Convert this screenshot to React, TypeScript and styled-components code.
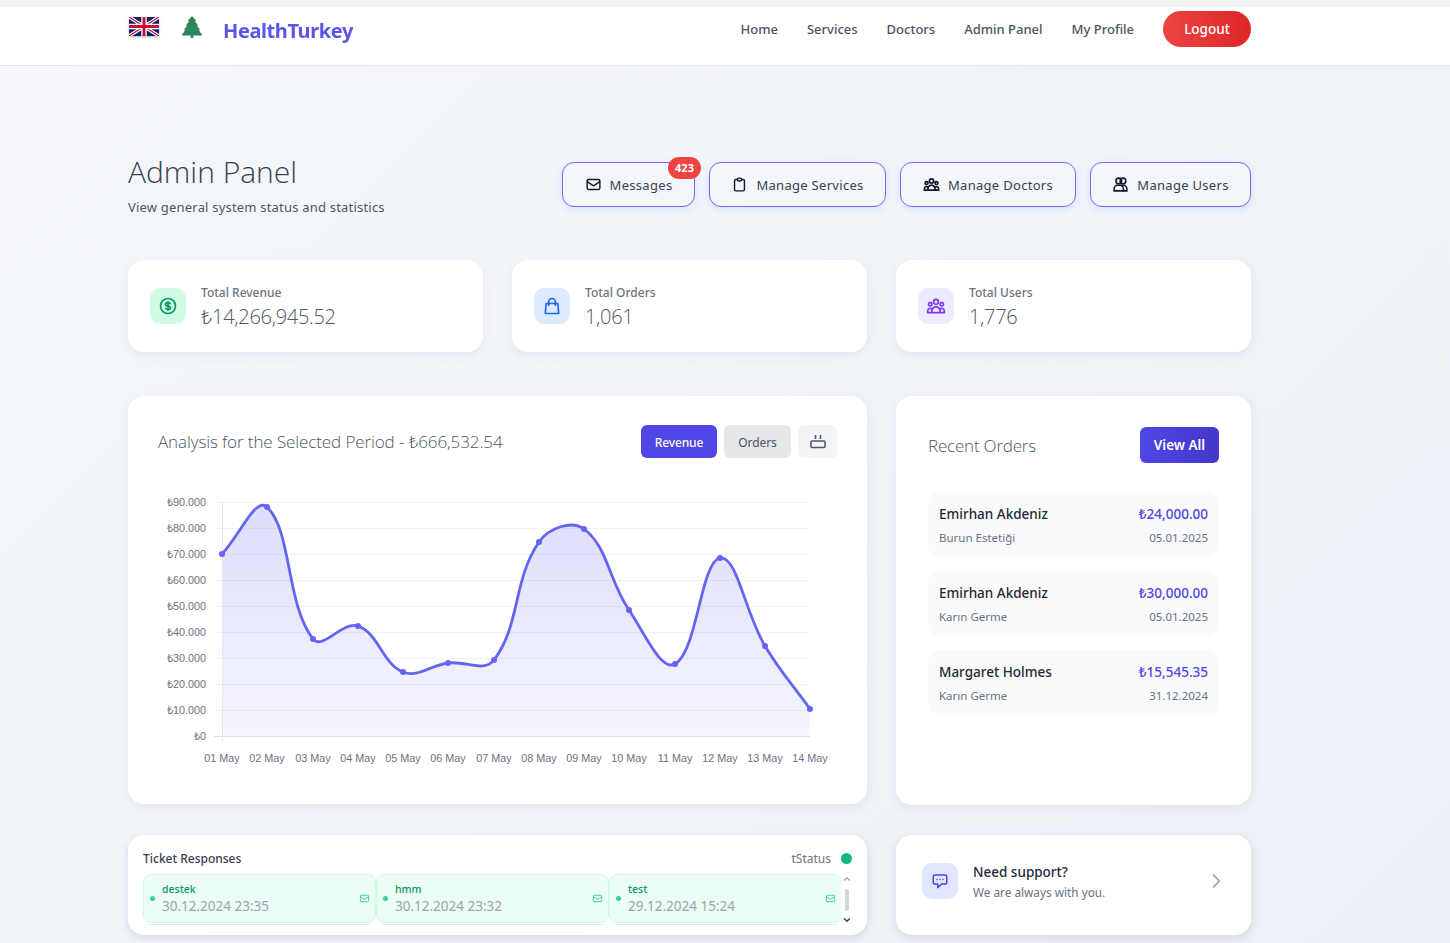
import React from "react";
import styled, { createGlobalStyle } from "styled-components";
import {
  HiOutlineChatAlt,
  HiOutlineChevronRight,
  HiOutlineClipboard,
  HiOutlineCurrencyDollar,
  HiOutlineMail,
  HiOutlineShoppingBag,
  HiOutlineUserGroup,
} from "react-icons/hi";
import { LuChevronDown, LuChevronUp } from "react-icons/lu";

const GlobalStyle = createGlobalStyle`
  html, body {
    margin: 0;
    padding: 0;
    height: 943px;
    overflow: hidden;
    font-family: "Noto Sans", "Liberation Sans", sans-serif;
    color: #1f2937;
  }
  * { box-sizing: border-box; }
`;

const LIGHT_FONT = `"Open Sans", "Noto Sans", sans-serif`;

const Page = styled.div`
  height: 943px;
  overflow: hidden;
  background: linear-gradient(135deg, #f6f8fc 0%, #eceff5 100%);
`;

const TopStripe = styled.div`
  height: 7px;
  background: #f3f4f6;
`;

const NavBar = styled.header`
  height: 59px;
  background: #fff;
  border-bottom: 1px solid #e5e7eb;
`;

const NavInner = styled.div`
  width: 1123px;
  margin-left: 128px;
  display: flex;
  align-items: flex-start;
  justify-content: space-between;
`;

const Brand = styled.div`
  display: flex;
  align-items: center;
  height: 47px;
`;

const Flag = styled.svg`
  width: 30px;
  height: 19px;
  margin: -8px 0 0 1px;
  filter: drop-shadow(0 1px 1px rgba(0, 0, 0, 0.3));
`;

const Tree = styled.svg`
  width: 20px;
  height: 22px;
  margin: -7px 0 0 23px;
`;

const Logo = styled.span`
  margin-left: 21px;
  font-size: 20px;
  font-weight: 700;
  letter-spacing: -0.4px;
  color: #4f46e5;
  opacity: 0.92;
`;

const NavLinks = styled.nav`
  display: flex;
  align-items: center;
  gap: 29px;
  height: 36px;
  margin-top: 4px;
`;

const NavLink = styled.a`
  font-size: 13px;
  font-weight: 500;
  color: #4b5563;
`;

const LogoutButton = styled.button`
  width: 88px;
  height: 36px;
  border: 0;
  border-radius: 18px;
  background: linear-gradient(90deg, #ef4444, #dc2626);
  color: #fff;
  font: 500 13.5px "Noto Sans", sans-serif;
`;

const Content = styled.main`
  width: 1123px;
  margin-left: 128px;
`;

const HeaderRow = styled.section`
  display: flex;
  justify-content: space-between;
  align-items: flex-start;
  height: 194px;
  padding-top: 86px;
`;

const Title = styled.h1`
  margin: 0;
  font-family: ${LIGHT_FONT};
  font-size: 30px;
  line-height: 40px;
  font-weight: 300;
  color: #374151;
`;

const Subtitle = styled.p`
  margin: 6px 0 0;
  font-size: 13px;
  line-height: 18px;
  letter-spacing: 0.2px;
  color: #4b5563;
`;

const ActionRow = styled.div`
  display: flex;
  gap: 14px;
  padding-top: 10px;
`;

const ActionButton = styled.button<{ $width: number }>`
  position: relative;
  width: ${(p) => p.$width}px;
  height: 45px;
  display: flex;
  align-items: center;
  justify-content: center;
  gap: 8px;
  background: #f3f6fb;
  border: 1px solid #8b5cf6;
  border-radius: 12px;
  box-shadow: 0 2px 6px rgba(56, 189, 248, 0.22);
  font: 400 13px "Noto Sans", sans-serif;
  letter-spacing: 0.3px;
  color: #374151;
  svg {
    width: 17px;
    height: 17px;
    color: #111827;
  }
`;

const CountBadge = styled.span`
  position: absolute;
  top: -6px;
  right: -7px;
  width: 33px;
  height: 22px;
  border-radius: 11px;
  background: #ef4444;
  color: #fff;
  font-size: 11px;
  font-weight: 700;
  letter-spacing: 0;
  line-height: 21px;
  text-align: center;
`;

const Grid = styled.div`
  display: grid;
  grid-template-columns: repeat(3, 355px);
  column-gap: 29px;
`;

const Card = styled.div`
  background: #fff;
  border-radius: 16px;
  box-shadow: 0 3px 10px rgba(100, 116, 139, 0.1);
`;

const StatCard = styled(Card)`
  height: 92px;
  display: flex;
  align-items: center;
  gap: 15px;
  padding-left: 22px;
`;

const StatIcon = styled.div<{ $bg: string; $color: string }>`
  width: 36px;
  height: 36px;
  border-radius: 10px;
  display: flex;
  align-items: center;
  justify-content: center;
  background: ${(p) => p.$bg};
  color: ${(p) => p.$color};
  svg {
    width: 20px;
    height: 20px;
  }
`;

const StatText = styled.div`
  padding-top: 3px;
`;

const StatLabel = styled.div`
  font-size: 12px;
  line-height: 16px;
  font-weight: 500;
  color: #6b7280;
`;

const StatValue = styled.div`
  margin-top: 2px;
  font-family: ${LIGHT_FONT};
  font-size: 20px;
  line-height: 28px;
  font-weight: 300;
  letter-spacing: -0.3px;
  color: #4b5563;
`;

const MainGrid = styled(Grid)`
  margin-top: 44px;
`;

const ChartCard = styled(Card)`
  grid-column: span 2;
  height: 408px;
  padding: 29px 30px 0;
`;

const ChartHead = styled.div`
  display: flex;
  justify-content: space-between;
  align-items: center;
  height: 33px;
`;

const ChartTitle = styled.h2`
  margin: 0;
  font-family: ${LIGHT_FONT};
  font-size: 17px;
  font-weight: 300;
  letter-spacing: -0.1px;
  color: #4b5563;
`;

const ChartTabs = styled.div`
  display: flex;
  gap: 7px;
`;

const ChartTab = styled.button<{ $active?: boolean }>`
  width: ${(p) => (p.$active ? 76 : 67)}px;
  height: 33px;
  padding: 1px 0 0;
  border: 0;
  border-radius: 6px;
  background: ${(p) => (p.$active ? "#4f46e5" : "#e5e7eb")};
  color: ${(p) => (p.$active ? "#fff" : "#4b5563")};
  font: ${(p) => (p.$active ? 500 : 400)} 12px "Noto Sans", sans-serif;
  letter-spacing: -0.1px;
`;

const IconTab = styled.button`
  width: 39px;
  height: 33px;
  border: 0;
  border-radius: 6px;
  background: #f3f4f6;
  display: flex;
  align-items: center;
  justify-content: center;
  padding: 0;
`;

const ChartSvg = styled.svg`
  display: block;
  width: 679px;
  height: 290px;
  margin-top: 32px;
`;

const OrdersCard = styled(Card)`
  height: 409px;
  padding: 31px 32px 0;
`;

const OrdersHead = styled.div`
  display: flex;
  justify-content: space-between;
  align-items: center;
  height: 36px;
  margin-bottom: 29px;
`;

const OrdersTitle = styled.h2`
  margin: 0;
  font-family: ${LIGHT_FONT};
  font-size: 17px;
  font-weight: 300;
  letter-spacing: -0.2px;
  color: #4b5563;
`;

const ViewAll = styled.button`
  width: 79px;
  height: 36px;
  border: 0;
  border-radius: 6px;
  background: linear-gradient(90deg, #4f46e5, #4338ca);
  color: #fff;
  font: 600 13.5px "Noto Sans", sans-serif;
`;

const OrderList = styled.div`
  display: flex;
  flex-direction: column;
  gap: 14px;
`;

const OrderRow = styled.div`
  height: 65px;
  padding: 2px 11px 0;
  border-radius: 12px;
  background: #f9fafb;
  display: grid;
  grid-template-columns: 1fr auto;
  align-content: center;
  row-gap: 6px;
`;

const OrderName = styled.span`
  font-size: 13.5px;
  line-height: 18px;
  font-weight: 500;
  color: #1f2937;
`;

const OrderAmount = styled.span`
  font-size: 13.5px;
  line-height: 18px;
  font-weight: 500;
  color: #4f46e5;
  text-align: right;
`;

const OrderMeta = styled.span<{ $right?: boolean }>`
  font-size: 11.5px;
  line-height: 18px;
  color: #6b7280;
  text-align: ${(p) => (p.$right ? "right" : "left")};
`;

const BottomGrid = styled(Grid)`
  margin-top: 30px;
`;

const TicketCard = styled(Card)`
  grid-column: span 2;
  height: 100px;
  padding: 14px 15px 0;
  box-shadow: 0 3px 8px rgba(100, 116, 139, 0.2);
`;

const TicketHead = styled.div`
  display: flex;
  justify-content: space-between;
  align-items: center;
  height: 19px;
`;

const TicketTitle = styled.span`
  font-size: 12px;
  font-weight: 500;
  color: #374151;
`;

const StatusWrap = styled.span`
  display: flex;
  align-items: center;
  gap: 10px;
  font-size: 12px;
  color: #6b7280;
`;

const StatusDot = styled.i`
  width: 11px;
  height: 11px;
  border-radius: 50%;
  background: #10b981;
`;

const TicketBody = styled.div`
  display: flex;
  margin-top: 6px;
`;

const TicketScroll = styled.div`
  height: 51px;
  overflow: hidden;
`;

const TicketRow = styled.div`
  display: grid;
  grid-template-columns: repeat(3, 233px);
  row-gap: 1px;
`;

const TicketItem = styled.div`
  height: 49px;
  border: 1px solid #d1fae5;
  border-radius: 8px;
  background: #ecfdf5;
  display: flex;
  align-items: center;
  padding: 0 5px 0 6px;
  gap: 7px;
`;

const TicketDot = styled.i`
  width: 5px;
  height: 5px;
  flex: none;
  border-radius: 50%;
  background: #34d399;
`;

const TicketText = styled.div`
  flex: 1;
`;

const TicketName = styled.div`
  font-size: 10.5px;
  line-height: 14px;
  font-weight: 500;
  color: #059669;
`;

const TicketDate = styled.div`
  font-size: 13.5px;
  line-height: 20px;
  color: #9ca3af;
`;

const TicketMail = styled(HiOutlineMail)`
  width: 11px;
  height: 11px;
  color: #34d399;
`;

const ScrollRail = styled.div`
  width: 11px;
  height: 51px;
  display: flex;
  flex-direction: column;
  align-items: center;
  justify-content: space-between;
`;

const ScrollUp = styled(LuChevronUp)`
  width: 10px;
  height: 10px;
  stroke-width: 3;
  color: #a3a8b2;
`;

const ScrollDown = styled(LuChevronDown)`
  width: 10px;
  height: 10px;
  stroke-width: 3.5;
  color: #374151;
`;

const ScrollThumb = styled.i`
  flex: none;
  width: 4px;
  height: 22px;
  border-radius: 2px;
  background: #d1d5db;
`;

const SupportCard = styled(Card)`
  height: 100px;
  display: flex;
  align-items: center;
  padding: 0 25px 8px 26px;
  box-shadow: 0 3px 8px rgba(100, 116, 139, 0.2);
`;

const SupportIcon = styled.div`
  width: 36px;
  height: 36px;
  border-radius: 10px;
  background: #e0e7ff;
  color: #4f46e5;
  display: flex;
  align-items: center;
  justify-content: center;
  svg {
    width: 18px;
    height: 18px;
  }
`;

const SupportText = styled.div`
  flex: 1;
  margin-left: 15px;
`;

const SupportTitle = styled.div`
  font-size: 13.5px;
  line-height: 20px;
  font-weight: 500;
  color: #1f2937;
`;

const SupportSub = styled.div`
  margin-top: 2px;
  font-size: 11.8px;
  line-height: 17px;
  color: #6b7280;
`;

const SupportArrow = styled(HiOutlineChevronRight)`
  width: 20px;
  height: 20px;
  color: #9ca3af;
`;

const BoldGroupIcon = styled(HiOutlineUserGroup)`
  path {
    stroke-width: 2.4;
  }
`;

const points: [number, number][] = [
  [64, 64], [109, 17], [155, 149], [200, 136], [245, 182], [290, 173], [336, 170],
  [381, 52], [426, 39], [471, 120], [517, 174], [562, 68], [607, 156], [652, 219],
];

const days = ["01", "02", "03", "04", "05", "06", "07", "08", "09", "10", "11", "12", "13", "14"];
const ticks = ["₺90.000", "₺80.000", "₺70.000", "₺60.000", "₺50.000", "₺40.000", "₺30.000", "₺20.000", "₺10.000", "₺0"];
const tickY = [12, 38, 64, 90, 116, 142, 168, 194, 220, 246];

// same control point maths as a chart.js line with tension 0.4
function splinePath(pts: [number, number][]) {
  const t = 0.4;
  const ctrl = pts.map((p, i) => {
    const prev = pts[i - 1] || p;
    const next = pts[i + 1] || p;
    const d01 = Math.hypot(p[0] - prev[0], p[1] - prev[1]);
    const d12 = Math.hypot(next[0] - p[0], next[1] - p[1]);
    const total = d01 + d12 || 1;
    const fa = (t * d01) / total;
    const fb = (t * d12) / total;
    return {
      before: [p[0] - fa * (next[0] - prev[0]), p[1] - fa * (next[1] - prev[1])],
      after: [p[0] + fb * (next[0] - prev[0]), p[1] + fb * (next[1] - prev[1])],
    };
  });
  let d = `M${pts[0][0]} ${pts[0][1]}`;
  for (let i = 1; i < pts.length; i++) {
    const a = ctrl[i - 1].after;
    const b = ctrl[i].before;
    d += ` C${a[0]} ${a[1]} ${b[0]} ${b[1]} ${pts[i][0]} ${pts[i][1]}`;
  }
  return d;
}

const LineChart = () => {
  const line = splinePath(points);
  return (
    <ChartSvg viewBox="0 0 679 290">
      <defs>
        <linearGradient id="revenueFill" x1="0" y1="0" x2="0" y2="1">
          <stop offset="0" stopColor="#6366f1" stopOpacity="0.22" />
          <stop offset="1" stopColor="#6366f1" stopOpacity="0.06" />
        </linearGradient>
      </defs>
      <path d={`${line} L652 246 L64 246 Z`} fill="url(#revenueFill)" />
      {tickY.map((y, i) => (
        <g key={y}>
          <line
            x1="56"
            x2="652"
            y1={y + 0.5}
            y2={y + 0.5}
            stroke={i === 9 ? "#dcdde6" : "#6b7280"}
            strokeOpacity={i === 9 ? 1 : 0.09}
          />
          <text x="48" y={y + 3.5} textAnchor="end" fontSize="10.8" fontFamily="Liberation Sans" fill="#6b7280">
            {ticks[i]}
          </text>
        </g>
      ))}
      <line x1="64.5" x2="64.5" y1="12" y2="252" stroke="#e5e7eb" />
      <path d={line} fill="none" stroke="#6366f1" strokeWidth="2.8" />
      {points.map((p) => (
        <circle key={p[0]} cx={p[0]} cy={p[1]} r="3" fill="#6366f1" />
      ))}
      {points.map((p, i) => (
        <text key={p[0]} x={p[0]} y="272" textAnchor="middle" fontSize="10.8" fontFamily="Liberation Sans" fill="#6b7280">
          {days[i]} May
        </text>
      ))}
    </ChartSvg>
  );
};

const orders = [
  { name: "Emirhan Akdeniz", amount: "₺24,000.00", service: "Burun Estetiği", date: "05.01.2025" },
  { name: "Emirhan Akdeniz", amount: "₺30,000.00", service: "Karın Germe", date: "05.01.2025" },
  { name: "Margaret Holmes", amount: "₺15,545.35", service: "Karın Germe", date: "31.12.2024" },
];

const tickets = [
  { name: "destek", date: "30.12.2024 23:35" },
  { name: "hmm", date: "30.12.2024 23:32" },
  { name: "test", date: "29.12.2024 15:24" },
];

export default function App() {
  return (
    <Page>
      <GlobalStyle />
      <TopStripe />
      <NavBar>
        <NavInner>
          <Brand>
            <Flag viewBox="0 0 60 38" preserveAspectRatio="none">
              <rect width="60" height="38" fill="#012169" />
              <path d="M0 0L60 38M60 0L0 38" stroke="#fff" strokeWidth="7" />
              <path d="M0 0L60 38M60 0L0 38" stroke="#c8102e" strokeWidth="2.5" />
              <path d="M30 0V38M0 19H60" stroke="#fff" strokeWidth="11" />
              <path d="M30 0V38M0 19H60" stroke="#c8102e" strokeWidth="6" />
            </Flag>
            <Tree viewBox="0 0 20 22">
              <path
                fill="#2f855a"
                d="M10 0L14 4.5L13 5.5L16 9L15 10L18 13.5L17 14.5L20 18.5V19.5H11.3V22H8.7V19.5H0V18.5L3 14.5L2 13.5L5 10L4 9L7 5.5L6 4.5Z"
              />
            </Tree>
            <Logo>HealthTurkey</Logo>
          </Brand>
          <NavLinks>
            <NavLink>Home</NavLink>
            <NavLink>Services</NavLink>
            <NavLink>Doctors</NavLink>
            <NavLink>Admin Panel</NavLink>
            <NavLink>My Profile</NavLink>
            <LogoutButton>Logout</LogoutButton>
          </NavLinks>
        </NavInner>
      </NavBar>
      <Content>
        <HeaderRow>
          <div>
            <Title>Admin Panel</Title>
            <Subtitle>View general system status and statistics</Subtitle>
          </div>
          <ActionRow>
            <ActionButton $width={133}>
              <HiOutlineMail />
              Messages
              <CountBadge>423</CountBadge>
            </ActionButton>
            <ActionButton $width={177}>
              <HiOutlineClipboard />
              Manage Services
            </ActionButton>
            <ActionButton $width={176}>
              <BoldGroupIcon />
              Manage Doctors
            </ActionButton>
            <ActionButton $width={161}>
              <svg viewBox="0 0 24 24" fill="none" stroke="currentColor" strokeWidth="2.2">
                <circle cx="9.5" cy="7" r="4" />
                <circle cx="15.5" cy="7" r="4" />
                <path d="M3 21v-3a5 5 0 0 1 5-5h3a5 5 0 0 1 5 5v3z" />
                <path d="M16 21h5v-3a5 5 0 0 0-5-5h-2" />
              </svg>
              Manage Users
            </ActionButton>
          </ActionRow>
        </HeaderRow>

        <Grid>
          <StatCard>
            <StatIcon $bg="#d1fae5" $color="#059669">
              <HiOutlineCurrencyDollar />
            </StatIcon>
            <StatText>
              <StatLabel>Total Revenue</StatLabel>
              <StatValue>₺14,266,945.52</StatValue>
            </StatText>
          </StatCard>
          <StatCard>
            <StatIcon $bg="#dbeafe" $color="#2563eb">
              <HiOutlineShoppingBag />
            </StatIcon>
            <StatText>
              <StatLabel>Total Orders</StatLabel>
              <StatValue>1,061</StatValue>
            </StatText>
          </StatCard>
          <StatCard>
            <StatIcon $bg="#ede9fe" $color="#7c3aed">
              <HiOutlineUserGroup />
            </StatIcon>
            <StatText>
              <StatLabel>Total Users</StatLabel>
              <StatValue>1,776</StatValue>
            </StatText>
          </StatCard>
        </Grid>

        <MainGrid>
          <ChartCard>
            <ChartHead>
              <ChartTitle>Analysis for the Selected Period - ₺666,532.54</ChartTitle>
              <ChartTabs>
                <ChartTab $active>Revenue</ChartTab>
                <ChartTab>Orders</ChartTab>
                <IconTab>
                  <svg width="16" height="14" viewBox="0 0 16 14" fill="none" stroke="#4b5563" strokeWidth="1.5">
                    <path d="M5.5 0v4M10.5 0v4" />
                    <rect x="1" y="6" width="14" height="6.5" rx="1" />
                  </svg>
                </IconTab>
              </ChartTabs>
            </ChartHead>
            <LineChart />
          </ChartCard>
          <OrdersCard>
            <OrdersHead>
              <OrdersTitle>Recent Orders</OrdersTitle>
              <ViewAll>View All</ViewAll>
            </OrdersHead>
            <OrderList>
              {orders.map((o) => (
                <OrderRow key={o.amount}>
                  <OrderName>{o.name}</OrderName>
                  <OrderAmount>{o.amount}</OrderAmount>
                  <OrderMeta>{o.service}</OrderMeta>
                  <OrderMeta $right>{o.date}</OrderMeta>
                </OrderRow>
              ))}
            </OrderList>
          </OrdersCard>
        </MainGrid>

        <BottomGrid>
          <TicketCard>
            <TicketHead>
              <TicketTitle>Ticket Responses</TicketTitle>
              <StatusWrap>
                tStatus
                <StatusDot />
              </StatusWrap>
            </TicketHead>
            <TicketBody>
              <TicketScroll>
                <TicketRow>
                  {tickets.map((t) => (
                    <TicketItem key={t.name}>
                      <TicketDot />
                      <TicketText>
                        <TicketName>{t.name}</TicketName>
                        <TicketDate>{t.date}</TicketDate>
                      </TicketText>
                      <TicketMail />
                    </TicketItem>
                  ))}
                  {/* top edge of the next row, the rest is scrolled away */}
                  <TicketItem />
                  <TicketItem />
                  <TicketItem />
                </TicketRow>
              </TicketScroll>
              <ScrollRail>
                <ScrollUp />
                <ScrollThumb />
                <ScrollDown />
              </ScrollRail>
            </TicketBody>
          </TicketCard>
          <SupportCard>
            <SupportIcon>
              <HiOutlineChatAlt />
            </SupportIcon>
            <SupportText>
              <SupportTitle>Need support?</SupportTitle>
              <SupportSub>We are always with you.</SupportSub>
            </SupportText>
            <SupportArrow />
          </SupportCard>
        </BottomGrid>
      </Content>
    </Page>
  );
}
